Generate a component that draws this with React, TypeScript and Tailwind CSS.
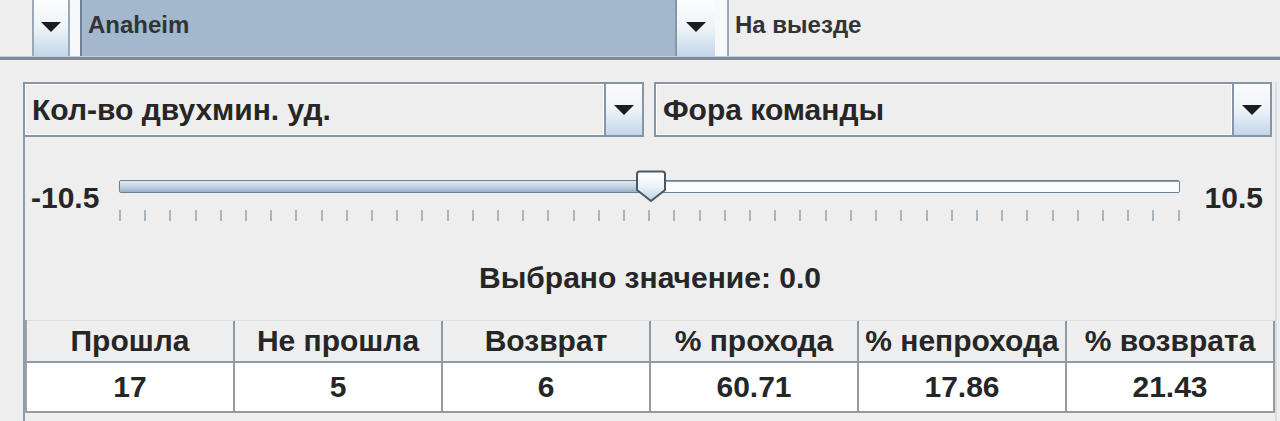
import React from "react";

const TXT = "text-[#262626] font-bold font-['Liberation_Sans',Arial,sans-serif]";

function Tri() {
  return (
    <svg width="20" height="10" viewBox="0 0 20 10">
      <polygon points="0,0 20,0 10,10" fill="#1c1c1c" />
    </svg>
  );
}

function ArrowBtn({ cls }: { cls: string }) {
  return (
    <div
      className={`flex items-center justify-center bg-linear-to-b from-[#fbfcfd] via-[#eef3f8] to-[#c3d6ea] ${cls}`}
    >
      <Tri />
    </div>
  );
}

function Combo({ label, cls }: { label: string; cls: string }) {
  return (
    <div
      className={`flex h-[55px] border-2 border-[#8496a8] bg-[#eeeeee] ${cls}`}
    >
      <div className="flex flex-1 items-center border border-white pl-[6px]">
        <span className={`${TXT} text-[30px] leading-none`}>{label}</span>
      </div>
      <ArrowBtn cls="w-[38px] border-l-2 border-[#8496a8]" />
    </div>
  );
}

const TICKS = Array.from({ length: 43 }, (_, i) => i);

const HEAD = ["Прошла", "Не прошла", "Возврат", "% прохода", "% непрохода", "% возврата"];
const VALS = ["17", "5", "6", "60.71", "17.86", "21.43"];

export default function App() {
  const value = 0;
  const pct = ((value + 10.5) / 21) * 100;
  return (
    <div className="w-[1280px] h-[421px] overflow-hidden bg-[#eeeeee]">
      {/* top row */}
      <div className="flex h-[56px]">
        <div className="w-[32px] bg-[#eeeeee]" />
        <ArrowBtn cls="w-[38px] border-x-2 border-[#9aa9b8] pb-[2px]" />
        <div className="w-[10px] bg-[#f7f8f9]" />
        <div className="flex w-[595px] items-center border-l-2 border-[#6f8194] bg-[#a3b8cc] pl-[6px] pb-[6px]">
          <span className={`${TXT} text-[24px] leading-none text-[#333333]`}>Anaheim</span>
        </div>
        <ArrowBtn cls="w-[40px] border-l-2 border-[#8496a8] pb-[2px]" />
        <div className="w-[12px] bg-[#f7f8f9]" />
        <div className="flex flex-1 items-center border-l-2 border-[#9aa9b8] bg-[#eeeeee] pl-[6px] pb-[6px]">
          <span className={`${TXT} text-[24px] leading-none text-[#333333]`}>На выезде</span>
        </div>
      </div>
      {/* separator */}
      <div className="h-[4px] border-t border-[#c4ced8] bg-[#7d8a97]" />

      {/* panel */}
      <div className="pl-[23px] pt-[22px]">
        <div className="h-[400px] w-[1254px] border-l-2 border-r-2 border-l-[#8d9cab] border-r-[#d6dde4]">
          {/* combos */}
          <div className="-ml-[2px] flex gap-[10px]">
            <Combo label="Кол-во двухмин. уд." cls="w-[621px]" />
            <Combo label="Фора команды" cls="w-[618px]" />
          </div>

          {/* slider row */}
          <div className="mt-[33px] flex h-[55px] items-center">
            <div className={`${TXT} w-[80px] pl-[6px] text-[30px] leading-none`}>-10.5</div>
            <div className="relative h-[55px] flex-1">
              <div className="mx-[14px] mt-[10px] flex h-[13px] overflow-hidden rounded-[2px] border border-[#6c7e91]">
                <div
                  className="h-full bg-linear-to-b from-[#dfe8f2] via-[#c4d4e6] to-[#9ab1ca]"
                  style={{ width: `${pct}%` }}
                />
                <div className="h-full flex-1 border-t border-[#8f9caa] bg-[#fafbfc]" />
              </div>
              <div className="mx-[14px] mt-[17px] flex h-[12px] justify-between">
                {TICKS.map((t) => (
                  <div key={t} className="h-[11px] w-[2px] bg-[#aab5c0]" />
                ))}
              </div>
              <div
                className="absolute top-0 h-[33px] w-[31px] -translate-x-1/2"
                style={{ left: `calc(14px + (100% - 28px) * ${pct / 100} + 1px)` }}
              >
                <svg width="31" height="33" viewBox="0 0 31 33">
                  <defs>
                    <linearGradient id="tg" x1="0" y1="0" x2="0" y2="1">
                      <stop offset="0" stopColor="#ffffff" />
                      <stop offset="0.5" stopColor="#eef3f9" />
                      <stop offset="1" stopColor="#bcd0e6" />
                    </linearGradient>
                  </defs>
                  <path
                    d="M1.5,4 Q1.5,1.5 4,1.5 H27 Q29.5,1.5 29.5,4 V20 L15.5,31 L1.5,20 Z"
                    fill="url(#tg)"
                    stroke="#4b5763"
                    strokeWidth="2"
                    strokeLinejoin="round"
                  />
                </svg>
              </div>
            </div>
            <div className={`${TXT} w-[81px] pr-[12px] text-right text-[30px] leading-none`}>10.5</div>
          </div>

          {/* value label */}
          <div className="h-[95px] pt-[37px] text-center">
            <span className={`${TXT} text-[30px] leading-[32px]`}>Выбрано значение: 0.0</span>
          </div>

          {/* table */}
          <div className="w-[1250px] border-l-2 border-[#98a3ae]">
            <div className="grid h-[43px] grid-cols-6 border-t border-b-2 border-t-[#d8dde2] border-b-[#8e9aa6] bg-[#eeeeee]">
              {HEAD.map((h) => (
                <div
                  key={h}
                  className="flex items-center justify-center border-r-2 border-[#8e9aa6]"
                >
                  <span className={`${TXT} text-[30px] leading-none`}>{h}</span>
                </div>
              ))}
            </div>
            <div className="grid h-[50px] grid-cols-6 border-b-2 border-[#9a9a9a] bg-white">
              {VALS.map((v, i) => (
                <div
                  key={i}
                  className="flex items-center justify-center border-r-2 border-[#9a9a9a]"
                >
                  <span className={`${TXT} text-[30px] leading-none`}>{v}</span>
                </div>
              ))}
            </div>
          </div>
        </div>
      </div>
    </div>
  );
}
